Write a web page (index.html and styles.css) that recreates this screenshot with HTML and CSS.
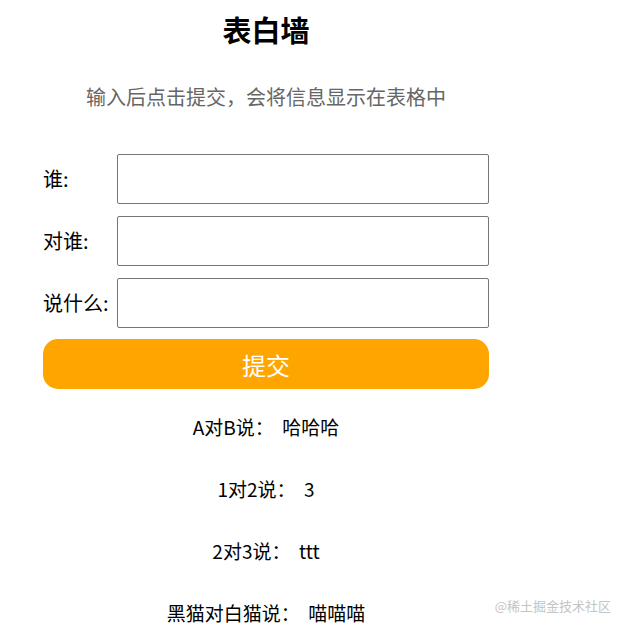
FILE: index.html
```html
<!DOCTYPE html>
<html lang="zh-CN">
<head>
<meta charset="utf-8">
<title>表白墙</title>
<link rel="stylesheet" href="styles.css">
</head>
<body>
<div class="page">
  <h1 class="title">表白墙</h1>
  <p class="subtitle">输入后点击提交，会将信息显示在表格中</p>
  <div class="form">
    <div class="row"><span class="label">谁:</span><input class="field" type="text"></div>
    <div class="row"><span class="label">对谁:</span><input class="field" type="text"></div>
    <div class="row"><span class="label">说什么:</span><input class="field" type="text"></div>
    <button class="submit" type="button">提交</button>
  </div>
  <div class="results">
    <div class="result">A对B说：&nbsp;&nbsp;哈哈哈</div>
    <div class="result">1对2说：&nbsp;&nbsp;3</div>
    <div class="result">2对3说：&nbsp;&nbsp;ttt</div>
    <div class="result">黑猫对白猫说：&nbsp;&nbsp;喵喵喵</div>
  </div>
</div>
<div class="watermark">@稀土掘金技术社区</div>
</body>
</html>
```
FILE: styles.css
```css
html, body {
  margin: 0;
  padding: 0;
  background: #fff;
}
body {
  font-family: "Noto Sans CJK SC", "Noto Sans", sans-serif;
  color: #000;
  width: 629px;
  height: 632px;
  position: relative;
  overflow: hidden;
}
.page {
  width: 446px;
  margin-left: 43px;
  display: flex;
  flex-direction: column;
}
.title {
  margin: 14px 0 0;
  font-size: 29px;
  line-height: 30px;
  font-weight: 700;
  text-align: center;
}
.subtitle {
  margin: 39px 0 0;
  font-size: 20px;
  line-height: 28px;
  color: #666;
  text-align: center;
}
.form {
  margin-top: 43px;
  display: flex;
  flex-direction: column;
  gap: 11.75px;
}
.row {
  display: flex;
  align-items: center;
  height: 50px;
}
.label {
  width: 74px;
  flex: none;
  font-size: 20px;
  line-height: 28px;
  white-space: nowrap;
}
.field {
  flex: 1;
  height: 50px;
  box-sizing: border-box;
  border: 1px solid #767676;
  border-radius: 2px;
  margin: 0;
  padding: 0 8px;
  font-size: 18px;
  outline: none;
}
.submit {
  height: 50px;
  border: none;
  border-radius: 15px;
  background: #ffa500;
  color: #fff;
  font-family: inherit;
  font-size: 24px;
  margin: 0;
  padding: 0;
}
.results {
  margin-top: 7px;
  display: flex;
  flex-direction: column;
}
.result {
  height: 62px;
  line-height: 62px;
  font-size: 19px;
  text-align: center;
  white-space: nowrap;
}
.watermark {
  position: absolute;
  right: 18px;
  top: 597px;
  font-size: 13px;
  line-height: 18px;
  color: #c4c4c4;
}
```
